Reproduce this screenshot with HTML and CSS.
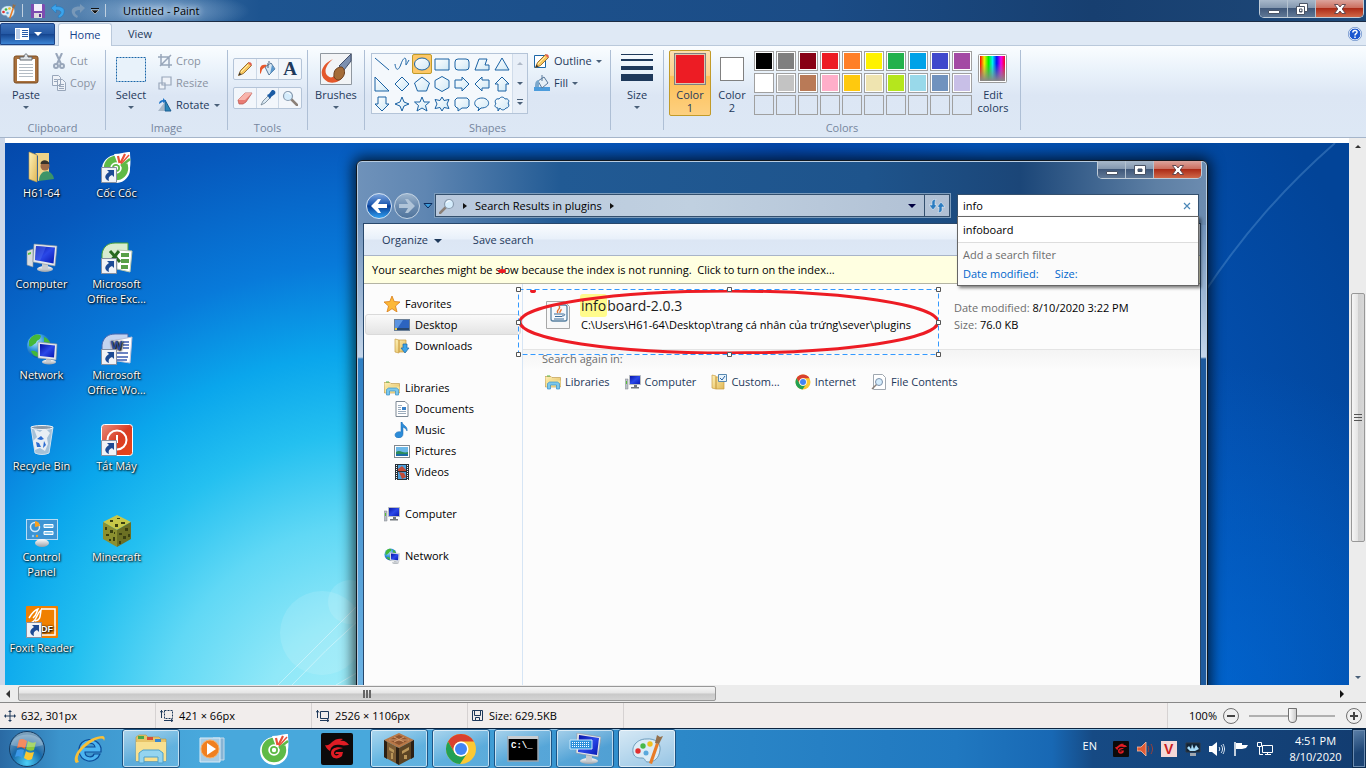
FILE: index.html
```html
<!DOCTYPE html>
<html lang="en">
<head>
  <meta charset="utf-8">
  <title>Untitled - Paint</title>
  <link rel="stylesheet" href="styles.css">
</head>
<body>

  <!-- shared icons -->
  <svg class="sprite" aria-hidden="true">
    <defs>
      <linearGradient id="gScreen" x1="0" y1="0" x2="1" y2="1"><stop offset="0" stop-color="#0410a0"/><stop offset=".5" stop-color="#2a48e8"/><stop offset="1" stop-color="#0616b0"/></linearGradient>
      <linearGradient id="gSilver" x1="0" y1="0" x2="0" y2="1"><stop offset="0" stop-color="#fff"/><stop offset="1" stop-color="#98a0a8"/></linearGradient>
      <linearGradient id="gFolder" x1="0" y1="0" x2="1" y2="1"><stop offset="0" stop-color="#fff2b8"/><stop offset="1" stop-color="#e0b858"/></linearGradient>
      <radialGradient id="gGlobe" cx=".35" cy=".3" r=".8"><stop offset="0" stop-color="#b8ecff"/><stop offset=".5" stop-color="#2a90d8"/><stop offset="1" stop-color="#083c90"/></radialGradient>
      <linearGradient id="gShape" x1="0" y1="0" x2="1" y2="1"><stop offset="0" stop-color="#fff"/><stop offset="1" stop-color="#cfe8f5"/></linearGradient>
      <linearGradient id="gRed" x1="0" y1="0" x2="1" y2="1"><stop offset="0" stop-color="#e89080"/><stop offset=".5" stop-color="#d83c24"/><stop offset="1" stop-color="#e84818"/></linearGradient>
      <linearGradient id="gRainbow"><stop offset="0" stop-color="#f80000"/><stop offset=".17" stop-color="#f8f000"/><stop offset=".34" stop-color="#00f000"/><stop offset=".5" stop-color="#00f0f0"/><stop offset=".67" stop-color="#0010f8"/><stop offset=".84" stop-color="#f000f0"/><stop offset="1" stop-color="#f80020"/></linearGradient>
      <linearGradient id="gFade" x1="0" y1="0" x2="0" y2="1"><stop offset=".3" stop-color="#888" stop-opacity="0"/><stop offset="1" stop-color="#888"/></linearGradient>
    </defs>
    <symbol id="i-computer" viewBox="0 0 32 32">
      <path d="M1 9l6-2v18l-6-2z" fill="#d8dce0" stroke="#8a9298" stroke-width=".6"/><path d="M2 11l3-1v2l-3 1z" fill="#5cc040"/>
      <ellipse cx="19" cy="27" rx="8" ry="3" fill="url(#gSilver)"/><path d="M16 21h6v6h-6z" fill="#c8ccd0"/>
      <path d="M8 2l23 2-2 20-22-4z" fill="#e4e8ec" stroke="#8a929c" stroke-width=".6"/><path d="M10 4l19 1.500-1.500 16L9 18z" fill="url(#gScreen)"/><path d="M10 4l10 1-6 14-5-1z" fill="#4c6cf0" opacity=".5"/>
    </symbol>
    <symbol id="i-pc" viewBox="0 0 16 16">
      <path d="M0 5h3v10H0z" fill="#b8bec4" stroke="#80868c" stroke-width=".5"/><path d="M1 7h1v3H1z" fill="#58c038"/>
      <path d="M4.500 1.500h11v9h-11z" fill="url(#gScreen)" stroke="#b8bcc0"/><path d="M9 11h3v2H9zM6 13h8v1.500H6z" fill="#70767c"/>
    </symbol>
    <symbol id="i-network" viewBox="0 0 32 32">
      <circle cx="13" cy="13" r="12" fill="url(#gGlobe)"/><path d="M3 8c4-8 10-7 12-5-1 5-4 3-5 7-3 1-4 5-7 3zM5 18c4-1 8 1 8 6-4 0-7-3-8-6zM18 4c3 1 6 4 6 6l-6-1z" fill="#44b838"/>
      <ellipse cx="23" cy="29" rx="7" ry="2.500" fill="url(#gSilver)"/><path d="M20 24h5v5h-5z" fill="#c8ccd0"/>
      <path d="M12 9l19 2-1 16-18-2z" fill="#e4e8ec" stroke="#8a929c" stroke-width=".6"/><path d="M14 11l15 1.500-1 12L14 23z" fill="url(#gScreen)"/>
    </symbol>
    <symbol id="i-shortcut" viewBox="0 0 16 16">
      <path d="M.5.5h15v15H.5z" fill="#f0f2f6" stroke="#8890a0"/><path d="M6 3h7v7l-2-2c-3 1-4 3-3 6C3 12 3 8 8 5z" fill="#1c4a94"/>
    </symbol>
    <symbol id="i-coccoc" viewBox="0 0 32 32">
      <path d="M15 4c6-2 9-3 14-3 0 5 1 9 0 16a14 14 0 1 1-14-13z" fill="#fff"/>
      <circle cx="15" cy="17" r="9" fill="none" stroke="#5fba46" stroke-width="6.500"/><circle cx="15" cy="17" r="4" fill="#5fba46"/><circle cx="15" cy="17" r="2.200" fill="#fff"/>
      <path d="M17 14L13 3 28 2v10z" fill="#fff"/>
      <path d="M17 5l1.500 7M24 3l-4.500 9" stroke="#e85038" stroke-width="2.200"/><path d="M28 4l-8 9" stroke="#e85038" stroke-width="1.500"/><path d="M29 8l-9 7" stroke="#5fba46" stroke-width="2.500"/>
    </symbol>
    <symbol id="i-libraries" viewBox="0 0 16 16">
      <path d="M0 2.500h6l1 1h8.500V13H.5z" fill="url(#gFolder)" stroke="#b89040" stroke-width=".6"/><path d="M2 1.500h3v1H2z" fill="#58b848"/><path d="M1 6.500h14.500v6H1z" fill="#f8e498"/>
      <path d="M2.500 15V9.500l2-1.500h8l2 1.500V15h-3v-4h-6v4z" fill="#7cc8ec" stroke="#3890c8" stroke-width=".7"/>
    </symbol>
    <symbol id="i-lens" viewBox="0 0 16 16">
      <path d="M1 15l6-6" stroke="#8a8078" stroke-width="2.500" stroke-linecap="round"/><circle cx="10" cy="6" r="4.500" fill="#d4ecfc" stroke="#8a9cb0" stroke-width="1.200"/><path d="M7.500 5a3 3 0 0 1 4-2" stroke="#fff" fill="none"/>
    </symbol>
    <symbol id="i-pencil" viewBox="0 0 16 16">
      <path d="M1.500 14.500l2-5 8-8 3 3-8 8z" fill="#f8c860" stroke="#8c6428" stroke-width=".9"/><path d="M11 2l2-1 2 2-1 2z" fill="#e06050"/><path d="M1.500 14.500l1-3 2 2z" fill="#333"/><path d="M4 11l7-7" stroke="#fff0b0"/>
    </symbol>
    <symbol id="i-bucket" viewBox="0 0 16 16">
      <path d="M5 6l6-4 4 6-6 6z" fill="#d4e6f4" stroke="#58789a"/><path d="M9 2V0M8 2v5" stroke="#4a6078"/><path d="M7 4C3 3 1 4 0 7v6c2-1 1-5 4-6z" fill="#e8582c"/><path d="M10 13l5-5-3-4z" fill="#5c98cc"/>
    </symbol>
    <symbol id="i-palette" viewBox="0 0 32 32">
      <path d="M3 22C-1 14 6 6 15 6c9-1 15 4 14 11-1 8-5 12-12 12-4 0-2-4-6-4-3 0-6 0-8-3z" fill="#dcecf6" stroke="#6c9cbc"/><circle cx="7" cy="18" r="2.700" fill="#e03030"/><circle cx="12" cy="13" r="2.700" fill="#48b848"/><circle cx="19" cy="11" r="2.700" fill="#f0c020"/><circle cx="15" cy="20" r="2.500" fill="#5aa8dc"/>
      <path d="M18 30l7-20 3 1-7 20z" fill="#e87c28"/><path d="M24 10l2-8 3 2 3-1-4 8z" fill="#94704c"/>
    </symbol>
    <symbol id="i-garena" viewBox="0 0 32 32">
      <rect width="32" height="32" rx="2" fill="#0c0a0a"/>
      <path d="M4 12c3 1 5-1 7-3 3-3 7-4 11-3l-3 2c4-1 7 1 9 4-3 0-5 1-8 0-5-1-8 0-10 3l-1 3c-2-1-4-3-5-6z" fill="#e01c24"/>
      <path d="M22 15c-6-2-12 0-12 5 0 6 7 7 11 3l1-4h-7l-1 2h4c-1 2-5 2-5-1 0-3 5-4 9-5z" fill="#e01c24"/>
    </symbol>
    <symbol id="i-min" viewBox="0 0 12 12"><path d="M.5 7.500h11v3H.5z" fill="#fff" stroke="#4a5466"/></symbol>
    <symbol id="i-max" viewBox="0 0 12 12"><path d="M.5 1.500h11v9H.5zM4 5v2.500h4V5z" fill="#fff" fill-rule="evenodd" stroke="#4a5466"/></symbol>
    <symbol id="i-close" viewBox="0 0 12 12"><path d="M.5 1.500h3.500l2 2.500 2-2.500h3.500L8.200 6l3.300 4.500H8L6 8l-2 2.500H.5L3.800 6z" fill="#fff" stroke="#56404a" stroke-width=".9"/></symbol>
    <symbol id="i-chrome" viewBox="0 0 32 32">
      <circle cx="16" cy="16" r="15" fill="#fcc934"/><path d="M3 8.500A15 15 0 0 1 29 8.500H16a7.500 7.500 0 0 0-6.500 11.200z" fill="#d9412f"/><path d="M3 8.500A15 15 0 0 0 15 31l7.500-11.200a7.500 7.500 0 0 1-13 0z" fill="#22a053"/><circle cx="16" cy="16" r="7.500" fill="#fff"/><circle cx="16" cy="16" r="6" fill="#4285f4"/>
    </symbol>
  </svg>

  <header class="titlebar">
    <div class="quick-access">
      <svg width="16" height="16"><use href="#i-palette"/></svg>
      <span class="qa-line"></span>
      <button aria-label="Save"><svg width="14" height="14" viewBox="0 0 14 14"><path d="M0 0h13l1 1v13H0z" fill="#7c4cb0"/><path d="M3 0h8v7H3z" fill="#f4f0fa"/><path d="M3 9h8v5H3z" fill="#ddd"/><path d="M8 10h2v3H8z" fill="#5c3490"/></svg></button>
      <button aria-label="Undo"><svg width="14" height="14" viewBox="0 0 14 14"><path d="M0 4l5-4v2.500c7 0 9 2.500 8 6.500-1 3-3 4-5 5l-1-2c3-2 4-4 2-5-1-1-2-1-4-1v3z" fill="#3ca4ec" stroke="#1c74b8" stroke-width=".5"/></svg></button>
      <button aria-label="Redo"><svg width="14" height="14" viewBox="0 0 14 14"><path d="M14 4L9 0v2.500C2 2.500 0 5 1 9c1 3 3 4 5 5l1-2c-3-2-4-4-2-5 1-1 2-1 4-1v3z" fill="#7898b8"/></svg></button>
      <button aria-label="Customize"><svg width="8" height="8" viewBox="0 0 8 8"><path d="M0 1.500h8" stroke="#111"/><path d="M0 3h8L4 7z" fill="#111" stroke="#fff" stroke-width=".5"/></svg></button>
      <span class="qa-line"></span>
    </div>
    <span class="titlebar-text">Untitled - Paint</span>
    <div class="window-buttons">
      <button aria-label="Minimize"><svg width="12" height="12"><use href="#i-min"/></svg></button>
      <button aria-label="Restore"><svg width="12" height="12" viewBox="0 0 12 12"><path d="M3.500.5h8v8h-8z" fill="#fff" stroke="#4a5466"/><path d="M.5 3.500h8v8h-8zM3.500 6v3h2.500V6z" fill="#fff" fill-rule="evenodd" stroke="#4a5466"/></svg></button>
      <button class="close" aria-label="Close"><svg width="12" height="12"><use href="#i-close"/></svg></button>
    </div>
  </header>

  <nav class="tabs">
    <button class="file-tab" aria-label="Paint menu"><svg width="28" height="12" viewBox="0 0 28 12"><path d="M0 0h14v12H0z" fill="#fff"/><path d="M1 1h4v10H1z" fill="#b8cce8"/><path d="M7 2.500h6M7 4.500h6M7 6.500h6M7 8.500h6" stroke="#2a5ca8"/><path d="M19 4h8l-4 4z" fill="#fff"/></svg></button>
    <button class="tab active">Home</button>
    <button class="tab">View</button>
    <button class="help" aria-label="Help"><svg width="14" height="14" viewBox="0 0 14 14"><circle cx="7" cy="7" r="6" fill="#1c58d0" stroke="#fff"/><circle cx="7" cy="7" r="6.700" fill="none" stroke="#3c6cb8" stroke-width=".6"/><path d="M4.800 5.500C5 2.500 9.500 3 9 5.500 8.800 6.800 7 6.700 7 8.500M7 9.500v1.500" fill="none" stroke="#fff" stroke-width="1.500"/></svg></button>
  </nav>

  <section class="ribbon">
    <div class="group clipboard">
      <div class="group-body">
        <button class="big"><svg width="26" height="32" viewBox="0 0 26 32"><rect x="1" y="3" width="24" height="27" rx="2" fill="#a8703c" stroke="#7c4c20"/><path d="M4 6h18v22H4z" fill="#fff"/><path d="M6 11.500h14M6 14.500h14M6 17.500h14M6 20.500h14M6 23.500h14" stroke="#b4bcc4"/><path d="M7 7V4h4c0-4 4-4 4 0h4v3z" fill="#e0e4e8" stroke="#606870"/></svg><span>Paste</span><i class="arrow"></i></button>
        <div class="stack">
          <button class="small off"><svg width="14" height="16" viewBox="0 0 14 16" fill="none" stroke="#98a6ba" stroke-width="2"><path d="M4 0l5 11M10 0L5 11"/><circle cx="4" cy="13" r="2"/><circle cx="10" cy="13" r="2"/></svg>Cut</button>
          <button class="small off"><svg width="14" height="16" viewBox="0 0 14 16" fill="#eef2f8" stroke="#98a6ba"><path d="M.5.5h6l2 2v8h-8zM5.500 4.500h5l3 3v8h-8z"/><path d="M2 4.500h3M2 6.500h3M7 9.500h5M7 11.500h5M7 13.500h5"/></svg>Copy</button>
        </div>
      </div>
      <div class="group-label">Clipboard</div>
    </div>

    <div class="group image">
      <div class="group-body">
        <button class="big"><svg width="32" height="32" viewBox="0 0 32 32"><path d="M1.500 4.500h29v24h-29z" fill="#e8f2fa" stroke="#1a66a8" stroke-dasharray="2 1"/></svg><span>Select</span><i class="arrow"></i></button>
        <div class="stack">
          <button class="small off"><svg width="14" height="14" viewBox="0 0 14 14" fill="none" stroke="#98a6ba" stroke-width="1.500"><path d="M3 0v11h11M0 3h11v11M2 12L13 1"/></svg>Crop</button>
          <button class="small off"><svg width="14" height="14" viewBox="0 0 14 14" fill="#eef2f8" stroke="#98a6ba" stroke-width="1.200"><path d="M4 1h9v8H4zM1 7h6v6H1z"/></svg>Resize</button>
          <button class="small"><svg width="14" height="14" viewBox="0 0 14 14"><path d="M0 13L6 5v8z" fill="#a8b8c8"/><path d="M7 13V2l6 11z" fill="#2c86b8" stroke="#1a5c90"/><path d="M1 6c0-3 2-4 4-4V0l3 3-3 2V3.500" fill="#1c74c8"/></svg>Rotate<i class="arrow"></i></button>
        </div>
      </div>
      <div class="group-label">Image</div>
    </div>

    <div class="group tools">
      <div class="group-body">
        <div class="tool-row">
          <button aria-label="Pencil"><svg width="16" height="16"><use href="#i-pencil"/></svg></button>
          <button aria-label="Fill with color"><svg width="16" height="16"><use href="#i-bucket"/></svg></button>
          <button class="letter" aria-label="Text">A</button>
        </div>
        <div class="tool-row">
          <button aria-label="Eraser"><svg width="16" height="16" viewBox="0 0 16 16"><path d="M1 10l7-7h7l-6 9-3 2H2z" fill="#e87c74" stroke="#b85048" stroke-width=".7"/><path d="M1 10l7-7h7l-7 7z" fill="#f8b4ac"/></svg></button>
          <button aria-label="Color picker"><svg width="16" height="16" viewBox="0 0 16 16"><path d="M1 15l2-4 6-6 2 2-6 6z" fill="#dceaf4" stroke="#6c8090" stroke-width=".8"/><path d="M7 5l2-1 3-4c3 0 4 2 3 4l-4 3-1 2z" fill="#1c5ca4"/></svg></button>
          <button aria-label="Magnifier"><svg class="flip" width="16" height="16"><use href="#i-lens"/></svg></button>
        </div>
      </div>
      <div class="group-label">Tools</div>
    </div>

    <div class="group brushes">
      <div class="group-body">
        <button class="big"><svg width="32" height="32" viewBox="0 0 32 32"><path d="M.5.500h31v31H.5z" fill="#f2f4f6" stroke="#9098a0"/><path d="M13 6C0 12-2 24 8 29c7 2 12-1 15-5l-6-6c-2 6-6 8-9 5C3 19 6 12 13 6z" fill="#e4582c"/><path d="M31 1v7l-7 9-5-4z" fill="#7c90b0" stroke="#42506c"/><path d="M14 24c-1-8 4-10 8-10 4 3 3 9-1 12-3 2-5 1-7-2z" fill="#a46c38" stroke="#6c4020"/></svg><span>Brushes</span><i class="arrow"></i></button>
      </div>
    </div>

    <div class="group shapes">
      <div class="group-body">
        <div class="shape-box">
          <div class="shape-grid">
            <button aria-label="Line"><svg viewBox="0 0 16 16"><path d="M1 2l14 12"/></svg></button>
            <button aria-label="Curve"><svg viewBox="0 0 16 16"><path d="M1 8c1 8 4 6 6 0s5-8 5-3-1 6 3-1" fill="none"/></svg></button>
            <button class="picked" aria-label="Oval"><svg viewBox="0 0 16 16"><ellipse cx="8" cy="8" rx="7.500" ry="6"/></svg></button>
            <button aria-label="Rectangle"><svg viewBox="0 0 16 16"><path d="M1 3h14v11H1z"/></svg></button>
            <button aria-label="Rounded rectangle"><svg viewBox="0 0 16 16"><rect x="1" y="3" width="14" height="11" rx="3"/></svg></button>
            <button aria-label="Polygon"><svg viewBox="0 0 16 16"><path d="M5 3h8l-2 6h4v5H1z"/></svg></button>
            <button aria-label="Triangle"><svg viewBox="0 0 16 16"><path d="M8 2l7 12H1z"/></svg></button>
            <button aria-label="Right triangle"><svg viewBox="0 0 16 16"><path d="M1 1l14 14H1z"/></svg></button>
            <button aria-label="Diamond"><svg viewBox="0 0 16 16"><path d="M8 1l7 7-7 7-7-7z"/></svg></button>
            <button aria-label="Pentagon"><svg viewBox="0 0 16 16"><path d="M8 1l7.500 6-3 8h-9l-3-8z"/></svg></button>
            <button aria-label="Hexagon"><svg viewBox="0 0 16 16"><path d="M8 .500l7 4v7l-7 4-7-4v-7z"/></svg></button>
            <button aria-label="Right arrow"><svg viewBox="0 0 16 16"><path d="M1 4h7V1l7 7-7 7v-3H1z"/></svg></button>
            <button aria-label="Left arrow"><svg viewBox="0 0 16 16"><path d="M15 4H8V1L1 8l7 7v-3h7z"/></svg></button>
            <button aria-label="Up arrow"><svg viewBox="0 0 16 16"><path d="M4 15V8H1l7-7 7 7h-3v7z"/></svg></button>
            <button aria-label="Down arrow"><svg viewBox="0 0 16 16"><path d="M4 1v7H1l7 7 7-7h-3V1z"/></svg></button>
            <button aria-label="Four-point star"><svg viewBox="0 0 16 16"><path d="M8 1l2 5 5 2-5 2-2 5-2-5-5-2 5-2z"/></svg></button>
            <button aria-label="Five-point star"><svg viewBox="0 0 16 16"><path d="M8 1l2 5h5.500l-4 3.500L13 15l-5-3-5 3 1.500-5.500L.5 6H6z"/></svg></button>
            <button aria-label="Six-point star"><svg viewBox="0 0 16 16"><path d="M8 1l2 3.500 5-1L13 8l2 4.500-5-1L8 15l-2-3.500-5 1L3 8 1 3.500l5 1z"/></svg></button>
            <button aria-label="Rounded callout"><svg viewBox="0 0 16 16"><path d="M3 2h10l2 2v6l-2 2H8l-4 3v-3H3l-2-2V4z"/></svg></button>
            <button aria-label="Oval callout"><svg viewBox="0 0 16 16"><path d="M4 15l1-3C-2 10 0 2 8 2s10 10-1 10z"/></svg></button>
            <button aria-label="Cloud callout"><svg viewBox="0 0 16 16"><path d="M5 3c2-3 5-2 6 0 3-1 5 2 3 4 2 3 0 5-2 5-2 3-5 2-6 0l-2 3v-3C1 12 0 9 2 8 0 5 2 2 5 3z"/></svg></button>
          </div>
          <div class="shape-scroll"><i class="arrow up"></i><i class="arrow"></i><i class="arrow more"></i></div>
        </div>
        <div class="stack">
          <button class="small"><svg width="16" height="16" viewBox="0 0 16 16"><path d="M.5 2.500h11v12H.5z" fill="#fff" stroke="#1a66a8"/><use href="#i-pencil" width="16" height="16"/></svg>Outline<i class="arrow"></i></button>
          <button class="small"><svg width="16" height="16" viewBox="0 0 16 16"><path d="M0 12h16v4H0z" fill="#4c9cdc"/><path d="M4 6l6-4 4 6-6 5z" fill="#e4eef6" stroke="#58789a"/><path d="M8 0v6" stroke="#58789a"/><path d="M5 5C2 5 1 7 1 12h4z" fill="#7ca8cc"/></svg>Fill<i class="arrow"></i></button>
        </div>
      </div>
      <div class="group-label">Shapes</div>
    </div>

    <div class="group size">
      <div class="group-body">
        <button class="big"><svg width="32" height="32" viewBox="0 0 32 32" fill="#1e395b"><path d="M0 1h32v1H0zM0 6h32v2H0zM0 13h32v4H0zM0 21h32v7H0z"/></svg><span>Size</span><i class="arrow"></i></button>
      </div>
    </div>

    <div class="group colors">
      <div class="group-body">
        <button class="color-pick picked"><span class="chip red"></span><span>Color<br>1</span></button>
        <button class="color-pick"><span class="chip white"></span><span>Color<br>2</span></button>
        <div class="swatches">
          <button class="c-black" aria-label="Black"></button><button class="c-gray" aria-label="Gray"></button><button class="c-darkred" aria-label="Dark red"></button><button class="c-red" aria-label="Red"></button><button class="c-orange" aria-label="Orange"></button><button class="c-yellow" aria-label="Yellow"></button><button class="c-green" aria-label="Green"></button><button class="c-turquoise" aria-label="Turquoise"></button><button class="c-indigo" aria-label="Indigo"></button><button class="c-purple" aria-label="Purple"></button>
          <button class="c-white" aria-label="White"></button><button class="c-lightgray" aria-label="Light gray"></button><button class="c-brown" aria-label="Brown"></button><button class="c-rose" aria-label="Rose"></button><button class="c-gold" aria-label="Gold"></button><button class="c-tan" aria-label="Light yellow"></button><button class="c-lime" aria-label="Lime"></button><button class="c-sky" aria-label="Light turquoise"></button><button class="c-bluegray" aria-label="Blue-gray"></button><button class="c-lavender" aria-label="Lavender"></button>
          <button class="empty"></button><button class="empty"></button><button class="empty"></button><button class="empty"></button><button class="empty"></button><button class="empty"></button><button class="empty"></button><button class="empty"></button><button class="empty"></button><button class="empty"></button>
        </div>
        <button class="big edit-colors"><svg width="30" height="32" viewBox="0 0 30 32"><rect x=".5" y="1.500" width="28" height="28" rx="1" fill="#fff" stroke="#9a9a9a"/><path d="M2 3h25v25H2z" fill="url(#gRainbow)"/><path d="M2 3h25v25H2z" fill="url(#gFade)"/></svg><span>Edit<br>colors</span></button>
      </div>
      <div class="group-label">Colors</div>
    </div>
  </section>

  <main class="workspace">
    <div class="canvas">
      <svg class="glow left" width="200" height="140" viewBox="0 0 200 140" fill="none" stroke="#fff">
        <circle cx="162" cy="88" r="42" fill="#fff" stroke="none" opacity=".12"/><circle cx="190" cy="57" r="22" fill="#fff" stroke="none" opacity=".12"/>
        <path d="M118 140q40-40 82-82M132 140q34-36 68-66M176 140l24-14" opacity=".4"/>
      </svg>
      <svg class="glow right" width="145" height="260" viewBox="0 0 145 260" fill="none" stroke="#7cb4e4"><path d="M0 150C40 90 80 45 131 0" opacity=".3" stroke-width="2"/></svg>

      <ul class="desktop-icons">
        <li><svg width="32" height="32" viewBox="0 0 32 32"><path d="M9 2h14v24l-11 4V5z" fill="#f0d488"/><path d="M3 1l8 3v27l-8-3z" fill="url(#gFolder)" stroke="#c8a048" stroke-width=".6"/><circle cx="19" cy="15" r="4.500" fill="#a06c48"/><path d="M14.500 13c0-5 8-5 9 0z" fill="#38342c"/><path d="M13 30c0-12 13-13 15-2z" fill="#3c9468"/></svg>H61-64</li>
        <li><svg width="32" height="32" viewBox="0 0 32 32"><use href="#i-computer"/></svg>Computer</li>
        <li><svg width="32" height="32" viewBox="0 0 32 32"><use href="#i-network"/></svg>Network</li>
        <li><svg width="32" height="32" viewBox="0 0 32 32"><path d="M5 3h22l-4 26c-4 2-10 2-14 0z" fill="#b8c8d8" opacity=".9" stroke="#e4ecf2"/><path d="M8 5l6 3 5-4 5 5-3 5 1 6-3 7-5-3-5 2-2-9 4-4z" fill="#e8eef4"/><path d="M11 15l4-3 3 3-3 1zM10 18l1 5h4l-2-4zM18 17l2 4-3 3z" fill="#2c6cd0"/><ellipse cx="16" cy="3.500" rx="11" ry="2" fill="#8898a8" stroke="#f0f4f8"/></svg>Recycle Bin</li>
        <li><svg width="32" height="32" viewBox="0 0 32 32"><rect x=".5" y="4.500" width="31" height="20" fill="#3c94d4" stroke="#b8dcf4"/><circle cx="9" cy="12" r="4.500" fill="none" stroke="#d4ecfc" stroke-width="1.500"/><path d="M9 12V6a6 6 0 0 1 5 5z" fill="#f8a020"/><path d="M18 9.500h9v3h-9zM18 16.500h9v3h-9z" fill="#8cc8ec" stroke="#fff"/><circle cx="7" cy="21" r="1.200" fill="#8cf"/><circle cx="11" cy="21" r="1.200" fill="#f8a020"/><ellipse cx="16" cy="28" rx="7" ry="4" fill="url(#gSilver)"/></svg>Control Panel</li>
        <li><svg width="32" height="32" viewBox="0 0 32 32"><rect width="32" height="32" rx="1" fill="#f08000"/><path d="M15 3h14v26H16" fill="none" stroke="#fff" stroke-width="1.500"/><path d="M3 12C6 7 8 4 12 3c-2 4-1 6-5 9M4 17c7-1 6-9 11-13-1 6 0 10-6 11" fill="none" stroke="#fff" stroke-width="1.500"/><text x="9" y="26" font-family="Liberation Sans" font-size="9" font-weight="bold" fill="#fff">PDF</text><use href="#i-shortcut" y="16" width="16" height="16"/></svg>Foxit Reader</li>
        <li><svg width="32" height="32" viewBox="0 0 32 32"><use href="#i-coccoc"/><use href="#i-shortcut" y="16" width="16" height="16"/></svg>Cốc Cốc</li>
        <li><svg width="32" height="32" viewBox="0 0 32 32"><path d="M1 12C2 4 8 1 14 1h13v24H1z" fill="#d8ecd0" stroke="#48a038"/><path d="M16 8l15 1-2 21-13-3z" fill="#fff" stroke="#b8c8b0"/><path d="M20 11h8v4h-8zM20 17h8v4h-8zM20 23h7v4h-7z" fill="#58a048"/><path d="M9 9l10 11M18 9L9 20" stroke="#286820" stroke-width="3"/><use href="#i-shortcut" y="16" width="16" height="16"/></svg>Microsoft Office Exc...</li>
        <li><svg width="32" height="32" viewBox="0 0 32 32"><path d="M1 12C2 4 8 1 14 1h13v24H1z" fill="#c4d4f0" stroke="#4868b0"/><path d="M10 8l21-4-2 26-19-3z" fill="#fff" stroke="#b8c0d8"/><path d="M22 9h6M22 12h6M22 15h6M16 20h11M16 24h11M16 27h10" stroke="#3c5cb0" stroke-width="1.500"/><text x="10" y="17" font-family="Liberation Sans" font-size="12" font-weight="bold" fill="#2c4c9c">W</text><use href="#i-shortcut" y="16" width="16" height="16"/></svg>Microsoft Office Wo...</li>
        <li><svg width="32" height="32" viewBox="0 0 32 32"><rect x=".5" y=".5" width="31" height="31" rx="3" fill="url(#gRed)" stroke="#fff"/><circle cx="16" cy="16" r="9.500" fill="none" stroke="#fff" stroke-width="2"/><path d="M16 11v8" stroke="#fff" stroke-width="2"/><use href="#i-shortcut" y="16" width="16" height="16"/></svg>Tắt Máy</li>
        <li><svg width="32" height="32" viewBox="0 0 32 32"><path d="M16 0l14 7-14 8L2 7z" fill="#c8c848"/><path d="M2 7l14 8v17L2 24z" fill="#8c9030"/><path d="M30 7l-14 8v17l14-8z" fill="#6c7024"/><path d="M9 5h3v2H9zM16 3h3v1h-3zM20 7h4v2h-4zM14 9h3v3h-3zM4 12h2v3H4zM9 15h3v3H9zM5 19h3v2H5zM12 22h2v4h-2zM8 24h2v2H8zM18 18h3v2h-3zM24 13h3v3h-3zM22 21h3v3h-3zM18 26h2v3h-2zM27 19h2v3h-2zM13 17h1v2h-1z" fill="#3c4010"/></svg>Minecraft</li>
      </ul>

      <div class="explorer">
        <div class="explorer-title">
          <div class="window-buttons">
            <button aria-label="Minimize"><svg width="12" height="12"><use href="#i-min"/></svg></button>
            <button aria-label="Maximize"><svg width="12" height="12"><use href="#i-max"/></svg></button>
            <button class="close" aria-label="Close"><svg width="12" height="12"><use href="#i-close"/></svg></button>
          </div>
        </div>

        <div class="nav-row">
          <button class="round back" aria-label="Back"><svg width="16" height="14" viewBox="0 0 16 14"><path d="M0 7l7-7h3L7 5h9v4H7l3 5H7z" fill="#fff"/></svg></button>
          <button class="round" aria-label="Forward"><svg width="16" height="14" viewBox="0 0 16 14"><path d="M16 7L9 0H6l3 5H0v4h9l-3 5h3z" fill="#b0c4d8"/></svg></button>
          <svg class="recent" width="10" height="6" viewBox="0 0 10 6"><path d="M1 .5h8L5 5z" fill="#3c9cdc" stroke="#0c2c5c"/></svg>
          <div class="address">
            <svg width="16" height="16"><use href="#i-lens"/></svg>
            <i class="arrow right"></i><span>Search Results in plugins</span><i class="arrow right"></i>
            <i class="arrow history"></i>
            <button class="refresh" aria-label="Refresh"><svg width="16" height="14" viewBox="0 0 16 14"><path d="M7 0C2 1 3 3 3 6H0l4 5 4-5H6c0-3 0-4 1-6zM9 14c5-1 4-3 4-6h3l-4-5-4 5h2c0 3 0 4-1 6z" fill="#2c7cc0" stroke="#fff" stroke-width=".5"/></svg></button>
          </div>
          <div class="search">
            <input type="text" value="info" aria-label="Search">
            <button aria-label="Clear"><svg width="8" height="8" viewBox="0 0 8 8"><path d="M1 1l6 6M7 1L1 7" stroke="#4c88b8" stroke-width="1.200"/></svg></button>
            <div class="suggestions">
              <div class="suggestion">infoboard</div>
              <div class="filters">
                <p>Add a search filter</p>
                <a href="#">Date modified:</a><a href="#">Size:</a>
              </div>
            </div>
          </div>
        </div>

        <div class="explorer-client">
          <div class="toolbar"><button>Organize <i class="arrow"></i></button><button>Save search</button></div>
          <div class="notice">Your searches might be slow because the index is not running.&nbsp; Click to turn on the index...</div>
          <div class="explorer-body">
            <ul class="tree">
              <li><svg width="16" height="16" viewBox="0 0 16 16"><path d="M8 0l2.200 5.500 5.800.5-4.500 4 1.500 6-5-3.300L3 16l1.500-6L0 6l5.800-.5z" fill="#fcb838" stroke="#d87c18" stroke-width=".8"/></svg>Favorites</li>
              <li class="sub selected"><svg width="16" height="16" viewBox="0 0 16 16"><rect x=".5" y="2.500" width="15" height="11" fill="#2c64c0" stroke="#6c8098"/><path d="M1 3h8L3 12H1z" fill="#5c94e0"/><path d="M1 11h14v2H1z" fill="#284870"/><path d="M1 11h2v2H1z" fill="#f0d040"/></svg>Desktop</li>
              <li class="sub"><svg width="16" height="16" viewBox="0 0 16 16"><path d="M1 1l4 1v13l-4-1zM5 2h7v12H5z" fill="url(#gFolder)" stroke="#c89c40" stroke-width=".7"/><path d="M9 6h4v4h2l-4 5-4-5h2z" fill="#3ca4e8" stroke="#1868a8" stroke-width=".7"/></svg>Downloads</li>
              <li class="gap"><svg width="16" height="16"><use href="#i-libraries"/></svg>Libraries</li>
              <li class="sub"><svg width="16" height="16" viewBox="0 0 16 16"><path d="M2 .5h9l3 3v12H2z" fill="#fff" stroke="#7c8894"/><path d="M4 4.500h4M4 6.500h3M4 8.500h3M4 10.500h8M4 12.500h8" stroke="#9cacbc"/><path d="M8 6h4v3H8z" fill="#3880c8"/></svg>Documents</li>
              <li class="sub"><svg width="16" height="16" viewBox="0 0 16 16"><path d="M7 0h1c1 4 6 4 5 9-1-3-3-3-4-4v7c0 5-8 5-8 1 0-3 4-4 6-3z" fill="#2c8cd8" stroke="#1868b0" stroke-width=".5"/></svg>Music</li>
              <li class="sub"><svg width="16" height="16" viewBox="0 0 16 16"><rect x=".5" y="2.500" width="15" height="12" fill="#fff" stroke="#808890"/><path d="M2 4h12v9H2z" fill="#6cb8e8"/><path d="M2 9c4-3 7 2 12 0v4H2z" fill="#2c8c5c"/><path d="M2 11h12v2H2z" fill="#1c6ca8"/></svg>Pictures</li>
              <li class="sub"><svg width="16" height="16" viewBox="0 0 16 16"><path d="M1 0h14v16H1z" fill="#283038"/><path d="M4 1h8v6H4zM4 8h8v7H4z" fill="#4ca0dc"/><path d="M4 5l4-3 4 4v1H4zM5 8l5 1 2 4-4 2z" fill="#c04c38"/><path d="M2.500 1v15M13.500 1v15" stroke="#fff" stroke-dasharray="1 1"/></svg>Videos</li>
              <li class="gap"><svg width="16" height="16"><use href="#i-pc"/></svg>Computer</li>
              <li class="gap"><svg width="16" height="16"><use href="#i-network"/></svg>Network</li>
            </ul>
            <div class="results">
              <div class="result">
                <svg width="24" height="28" viewBox="0 0 24 28"><path d="M.5.5h18l5 5v22H.5z" fill="#f8f8f8" stroke="#a8a8a8"/><rect x="5" y="4" width="16" height="16" rx="2" fill="#f4f8fc" stroke="#5880a0" stroke-width="1.300"/><path d="M13 5c3 3-4 4-1 7M15 8c1 2-2 2-1 4" stroke="#e8702c" fill="none" stroke-width="1.300"/><path d="M8 13h9M9 15.500h7M8 18h10M17 13c3 0 2 2-1 2" stroke="#3c6c98" fill="none"/></svg>
                <div class="result-name">
                  <h2><mark>info</mark>board-2.0.3</h2>
                  <p>C:\Users\H61-64\Desktop\trang cá nhân của trứng\sever\plugins</p>
                </div>
                <div class="result-info">
                  <p>Date modified: <b>8/10/2020 3:22 PM</b></p>
                  <p>Size: <b>76.0 KB</b></p>
                </div>
              </div>
              <div class="again">
                <p>Search again in:</p>
                <div class="again-links">
                  <a href="#"><svg width="16" height="16"><use href="#i-libraries"/></svg>Libraries</a>
                  <a href="#"><svg width="16" height="16"><use href="#i-pc"/></svg>Computer</a>
                  <a href="#"><svg width="16" height="16" viewBox="0 0 16 16"><path d="M1 1l4 1v13l-4-1zM5 3h8v12H5z" fill="url(#gFolder)" stroke="#c89c40" stroke-width=".7"/><path d="M7.500.5h8v7h-8z" fill="#e8f4fc" stroke="#5888b0"/><path d="M9 4l2 2 3-4" fill="none" stroke="#2860a0"/></svg>Custom...</a>
                  <a href="#"><svg width="16" height="16"><use href="#i-chrome"/></svg>Internet</a>
                  <a href="#"><svg width="16" height="16" viewBox="0 0 16 16"><path d="M2.500.5h9l3 3v12h-12z" fill="#fff" stroke="#a0a8b0"/><path d="M1 15l5-5" stroke="#8a8078" stroke-width="1.500"/><circle cx="8" cy="8" r="3.500" fill="#d4ecfc" stroke="#7c90a8"/></svg>File Contents</a>
                </div>
              </div>
            </div>
          </div>
        </div>
      </div>

      <svg class="drawing" width="450" height="100" viewBox="0 0 450 100">
        <ellipse cx="237" cy="57" rx="209" ry="31" fill="none" stroke="#ed1c24" stroke-width="3"/>
        <ellipse cx="10" cy="6" rx="4" ry="2" fill="#ed1c24"/><ellipse cx="41" cy="26" rx="3" ry="2" fill="#ed1c24"/>
        <path d="M26.500 24.500h420v65h-420z" fill="none" stroke="#fff"/>
        <path d="M26.500 24.500h420v65h-420z" fill="none" stroke="#3399ff" stroke-dasharray="5 3"/>
        <path d="M200 26.500h71M200 87.500h71" stroke="#ed1c24"/>
        <path d="M24.500 22.500h4v4h-4zM235.500 22.500h4v4h-4zM444.500 22.500h4v4h-4zM24.500 55.500h4v4h-4zM444.500 55.500h4v4h-4zM24.500 87.500h4v4h-4zM235.500 87.500h4v4h-4zM444.500 87.500h4v4h-4z" fill="#fff" stroke="#555"/>
      </svg>
    </div>
    <div class="scroll vertical"><i class="arrow up"></i><span class="before"></span><span class="thumb"></span><span class="after"></span><i class="arrow"></i></div>
    <div class="scroll horizontal"><i class="arrow left"></i><span class="thumb"></span><span class="after"></span><i class="arrow right"></i></div>
  </main>

  <footer class="statusbar">
    <div class="status-cell"><svg width="12" height="12" viewBox="0 0 12 12" stroke="#1e395b"><path d="M6 0v12M0 6h12M4.500 1.500h3M4.500 10.500h3M1.500 4.500v3M10.500 4.500v3" fill="none"/></svg>632, 301px</div>
    <div class="status-cell"><svg width="14" height="12" viewBox="0 0 14 12" fill="none" stroke="#1e395b"><path d="M4.500.5h8v8h-8z" stroke-dasharray="2 1"/><path d="M1.500 0v8M0 2.500l1.500-2L3 2.500M4 10.500h9M11 9l2 1.500-2 1.500"/></svg>421 × 66px</div>
    <div class="status-cell"><svg width="14" height="12" viewBox="0 0 14 12" fill="none" stroke="#1e395b"><path d="M4.500 1.500h8v7h-8z"/><path d="M1.500 0v8M0 2.500l1.500-2L3 2.500M4 10.500h9M11 9l2 1.500-2 1.500"/></svg>2526 × 1106px</div>
    <div class="status-cell"><svg width="12" height="12" viewBox="0 0 12 12" fill="none" stroke="#1e395b"><path d="M.5.5h10v10H.5zM2.500.5v5h6v-5M3.500 10.500v-3h4v3"/></svg>Size: 629.5KB</div>
    <div class="status-space"></div>
    <div class="zoom">
      <label for="zoom">100%</label>
      <button aria-label="Zoom out"><svg width="16" height="16" viewBox="0 0 16 16"><circle cx="8" cy="8" r="7.500" fill="#f0f0f0" stroke="#707070"/><path d="M4 8h8" stroke="#444" stroke-width="2"/></svg></button>
      <input type="range" id="zoom" min="0" max="100" value="50">
      <button aria-label="Zoom in"><svg width="16" height="16" viewBox="0 0 16 16"><circle cx="8" cy="8" r="7.500" fill="#f0f0f0" stroke="#707070"/><path d="M4 8h8M8 4v8" stroke="#444" stroke-width="2"/></svg></button>
    </div>
  </footer>

  <div class="taskbar">
    <button class="start" aria-label="Start"><svg width="38" height="38" viewBox="0 0 38 38"><defs><radialGradient id="gOrb" cx=".5" cy=".9" r=".9"><stop offset="0" stop-color="#4cd0f8"/><stop offset=".5" stop-color="#1868a8"/><stop offset="1" stop-color="#88a8c0"/></radialGradient></defs><circle cx="19" cy="19" r="17.500" fill="url(#gOrb)" stroke="#143c64"/><path d="M11 10c3-2 5-1 8 1l-2 8c-3-2-5-2-8-1z" fill="#f0642c"/><path d="M20 11c3 2 5 2 8 1l-2 8c-3 1-5 1-8-1z" fill="#8cc83c"/><path d="M9 20c3-1 5-1 7 0l-2 8c-2-2-5-2-7-1z" fill="#3c98e8"/><path d="M18 21c2 2 5 2 8 1l-2 7c-3 2-5 1-8-1z" fill="#fcc830"/><path d="M3 15C5 1 33 1 35 15c-9 3-22 3-32 0z" fill="#fff" opacity=".25"/></svg></button>
    <nav class="apps">
      <button aria-label="Internet Explorer"><svg width="32" height="32" viewBox="0 0 32 32"><path d="M28 19H12c0 6 8 6 9 2h6c-4 11-21 9-21-4S25 3 28 15zM12 14h10c-1-5-9-5-10 0z" fill="#4cb4f0" stroke="#0c4c98" stroke-width="1.200" fill-rule="evenodd"/><path d="M3 30c-6-6 10-27 27-27 2 1 2 3 1 5 0-4-6-3-12 1C8 16 2 24 6 29z" fill="#f8c038"/></svg></button>
      <button class="open" aria-label="Windows Explorer"><svg width="32" height="32" viewBox="0 0 32 32"><path d="M1 4l3-2h7l2 2h11l2 2h5v22H1z" fill="#e8c468" stroke="#b8943c" stroke-width=".6"/><path d="M3 3h6v3H3z" fill="#48a848"/><path d="M12 4h6v3h-6z" fill="#d84c34"/><path d="M20 6h6v3h-6z" fill="#3888d0"/><path d="M1 9h30v19H1z" fill="#f8e090"/><path d="M4 30V20l4-3h16l4 3v10h-5v-6H9v6z" fill="#94d4f0" stroke="#4ca0cc"/></svg></button>
      <button aria-label="Windows Media Player"><svg width="32" height="32" viewBox="0 0 32 32"><path d="M16 5h11v22H16z" fill="#88b4d4" stroke="#c4dcec"/><path d="M3 5h20v24H3z" fill="#a8cce4" stroke="#d8ecf8"/><circle cx="13" cy="16" r="9" fill="#f08020" stroke="#f8b068"/><path d="M10 10l9 6-9 6z" fill="#fff"/></svg></button>
      <button aria-label="Coc Coc"><svg width="32" height="32"><use href="#i-coccoc"/></svg></button>
      <button aria-label="Garena"><svg width="32" height="32"><use href="#i-garena"/></svg></button>
      <button class="open" aria-label="Minecraft"><svg width="32" height="32" viewBox="0 0 32 32"><path d="M16 0l15 7-15 8L1 7z" fill="#b87848"/><path d="M16 2l10 5-10 5L6 7z" fill="#8c5430"/><path d="M11 4l10 5M21 4L11 9M6 7h20" stroke="#d89c6c"/><path d="M1 7l15 8v17L1 24z" fill="#7c5c34"/><path d="M31 7l-15 8v17l15-8z" fill="#5c4424"/><path d="M1 7l3 2v17l-3-2zM13 14l3 1v17l-3-2zM28 9l3-2v17l-3 2z" fill="#2c2014"/><path d="M6 14l5 3v3l-5-3zM19 18l7-4v3l-7 4zM8 20h2v6H8zM21 22h3v4h-3z" fill="#b89458"/></svg></button>
      <button class="open" aria-label="Chrome"><svg width="32" height="32"><use href="#i-chrome"/></svg></button>
      <button class="open" aria-label="Command Prompt"><svg width="32" height="32" viewBox="0 0 32 32"><path d="M1 4h30v24H1z" fill="#000" stroke="#9ca4ac" stroke-width="1.500"/><path d="M1 3h30v3H1z" fill="#c8ccd0"/><text x="4" y="15" font-family="Liberation Mono" font-weight="bold" font-size="9" fill="#fff">C:\_</text></svg></button>
      <button class="open" aria-label="On-Screen Keyboard"><svg width="32" height="32" viewBox="0 0 32 32"><ellipse cx="20" cy="28" rx="9" ry="3" fill="url(#gSilver)"/><path d="M17 22h6v6h-6z" fill="#c8ccd0"/><path d="M8 0l24 4-3 20-22-4z" fill="#e4e8ec" stroke="#8a929c" stroke-width=".6"/><path d="M10 2l20 3-2 17-19-3z" fill="url(#gScreen)"/><path d="M1 7h22v9H1z" fill="#2c90dc" stroke="#c8e8fc"/><path d="M3 9.500h18M3 11.500h18M3 13.500h18" stroke="#fff" stroke-dasharray="1 1"/></svg></button>
      <button class="open current" aria-label="Paint"><svg width="32" height="32"><use href="#i-palette"/></svg></button>
    </nav>
    <div class="tray">
      <span class="lang">EN</span>
      <svg width="16" height="16"><use href="#i-garena"/></svg>
      <svg width="16" height="16" viewBox="0 0 16 16"><path d="M0 6h4l5-5v14l-5-5H0z" fill="#e05c34" stroke="#f8c0a8" stroke-width=".8"/><path d="M11 5c1 2 1 4 0 6M14 3c2 4 2 6 0 10" fill="none" stroke="#a04038"/></svg>
      <svg width="16" height="16" viewBox="0 0 16 16"><path d="M0 0h16v16H0z" fill="#f4d8d8"/><text x="3" y="13" font-family="Liberation Sans" font-weight="bold" font-size="14" fill="#c81c24">V</text></svg>
      <svg width="16" height="16" viewBox="0 0 16 16"><path d="M1 2h14v9H1z" fill="#102438" stroke="#303840"/><path d="M2 7l2-2 2 3 1-5 2 5 2-4 3 4-4 2H5z" fill="#a8dcf8"/><path d="M5 12h6v3H5z" fill="#a0a8b0"/></svg>
      <svg width="16" height="16" viewBox="0 0 16 16"><path d="M0 5h3l5-4v14l-5-4H0z" fill="#fff"/><path d="M10 6c1 1 1 3 0 4M12 4c2 2 2 6 0 8M14 3c2 4 2 6 0 10" fill="none" stroke="#dce8f4"/></svg>
      <svg width="16" height="16" viewBox="0 0 16 16"><path d="M2 1v14" stroke="#fff" stroke-width="1.500"/><path d="M3 2h6v2h6l-2 3-4 1H3z" fill="#fff"/></svg>
      <svg width="16" height="16" viewBox="0 0 16 16" fill="none" stroke="#fff"><path d="M5.500 4.500h10v7h-10zM8 13.500h6M10.500 12v1"/><path d="M.5 1.500h4v4h-4zM2.500 6v7.500H6" /></svg>
      <div class="clock">4:51 PM<br>8/10/2020</div>
      <button class="show-desktop" aria-label="Show desktop"></button>
    </div>
  </div>
</body>
</html>
```
FILE: styles.css
```css
* {
  box-sizing: border-box;
}

body {
  margin: 0;
  height: 100vh;
  overflow: hidden;
  display: flex;
  flex-direction: column;
  font-family: "Open Sans", "Noto Sans", sans-serif;
  font-size: 11px;
  line-height: 16px;
  color: #000;
  background: #fff;
}

button {
  margin: 0;
  padding: 0;
  border: 0;
  background: none;
  font: inherit;
  color: inherit;
}

svg {
  display: block;
  flex: none;
}

ul, p, h2 {
  margin: 0;
  padding: 0;
  list-style: none;
  font-weight: normal;
}

a {
  text-decoration: none;
}

.sprite {
  position: absolute;
  width: 0;
  height: 0;
}

/* small triangles */
.arrow {
  flex: none;
  width: 0;
  height: 0;
  border: 3px solid transparent;
  border-top-color: #4a6079;
  border-bottom: 0;
}

.arrow.up {
  border: 3px solid transparent;
  border-bottom-color: #333;
  border-top: 0;
}

.arrow.left {
  border: 4px solid transparent;
  border-right-color: #333;
  border-left: 0;
}

.arrow.right {
  border: 4px solid transparent;
  border-left-color: #111;
  border-right: 0;
}

/* title bar */
.titlebar {
  flex: none;
  height: 22px;
  display: flex;
  align-items: center;
  border-bottom: 1px solid #1c2c44;
  background:
    radial-gradient(ellipse 90px 20px at 160px 11px, rgba(170, 200, 230, 0.7), transparent),
    linear-gradient(90deg, #5b84ae 0, #4a7aaa 100px, #1d5490 260px, #1b4c86 60%, #173f70 80%, #1e4878);
}

.quick-access {
  display: flex;
  align-items: center;
  gap: 8px;
  width: 119px;
}

.quick-access svg:first-child {
  margin-right: -2px;
}

.qa-line {
  width: 1px;
  height: 13px;
  background: #c0d0e0;
}

.titlebar-text {
  flex: 1;
  padding-left: 4px;
  text-shadow: 0 0 6px #fff, 0 0 10px #bcd4ec;
}

.window-buttons {
  align-self: flex-start;
  display: flex;
  margin-right: 2px;
  border: 1px solid #c0ccd8;
  border-top: 0;
  border-radius: 0 0 5px 5px;
  overflow: hidden;
}

.window-buttons button {
  width: 28px;
  height: 17px;
  display: flex;
  align-items: center;
  justify-content: center;
  border-right: 1px solid #b4c2d0;
  background: linear-gradient(#a8b8ca, #8498b0 45%, #40587a 50%, #607896);
}

.window-buttons .close {
  width: 47px;
  border-right: 0;
  background: linear-gradient(#dca49c, #cc7060 45%, #ac2c18 50%, #d06848);
}

/* tabs */
.tabs {
  flex: none;
  height: 24px;
  display: flex;
  align-items: flex-end;
  background: #dfe9f5;
  border-bottom: 1px solid #bac9db;
}

.file-tab {
  width: 55px;
  height: 22px;
  padding-left: 14px;
  border: 1px solid #1c4488;
  border-radius: 2px 2px 0 0;
  background: linear-gradient(#3c70b8, #2458a4 50%, #164690 52%, #3c84d4);
}

.tab {
  width: 56px;
  height: 22px;
  color: #1e395b;
}

.tab.active {
  width: 54px;
  height: 23px;
  margin-left: 3px;
  margin-bottom: -1px;
  border: 1px solid #bac9db;
  border-bottom: 0;
  border-radius: 3px 3px 0 0;
  background: #fbfdff;
  color: #15428b;
}

.help {
  margin-left: auto;
  margin-right: 4px;
  align-self: center;
}

/* ribbon */
.ribbon {
  flex: none;
  height: 92px;
  display: flex;
  padding: 4px 0 2px;
  background: linear-gradient(#fafdff, #e8f1fa 30%, #dce6f4 55%, #dde8f5);
  border-bottom: 1px solid #a5b5ca;
  color: #1e395b;
}

.group {
  flex: none;
  display: flex;
  flex-direction: column;
  padding-right: 1px;
  background: linear-gradient(#aebfd5, #aebfd5) right top / 1px 80px no-repeat;
}

.group-body {
  flex: 1;
  display: flex;
}

.group-label {
  height: 14px;
  line-height: 14px;
  text-align: center;
  color: #76869e;
}

.group .arrow {
  margin-left: 4px;
}

.big {
  display: flex;
  flex-direction: column;
  align-items: center;
  line-height: 13px;
  padding-top: 3px;
}

.big svg {
  margin-bottom: 3px;
}

.group .big .arrow {
  margin: 5px 0 0;
}

.stack {
  display: flex;
  flex-direction: column;
}

.small {
  height: 22px;
  display: flex;
  align-items: center;
  gap: 4px;
}

.small .arrow {
  margin: 0;
}

.off {
  color: #8a93a2;
}

.clipboard { width: 106px; }
.clipboard .big { width: 52px; }
.image { width: 122px; }
.image .big { width: 50px; margin-right: 2px; }
.tools { width: 80px; }
.brushes { width: 57px; }
.brushes .big, .size .big { width: 100%; }
.shapes { width: 246px; }
.size { width: 53px; }
.colors { width: 357px; }

.tools .group-body {
  flex-direction: column;
  padding: 8px 5px 0;
  gap: 7px;
}

.tool-row {
  display: flex;
  height: 22px;
  border: 1px solid #b4c4d8;
  border-radius: 2px;
  background: #f2f6fb;
}

.tool-row button {
  flex: 1;
  display: flex;
  align-items: center;
  justify-content: center;
  border-right: 1px solid #ccd8e6;
}

.tool-row button:last-child {
  border-right: 0;
}

.letter {
  font: bold 19px/20px "Liberation Serif", serif;
}

.flip {
  transform: scaleX(-1);
}

.shapes .group-body {
  padding-left: 6px;
}

.shape-box {
  display: flex;
  width: 157px;
  height: 61px;
  margin: 3px 6px 0 0;
  border: 1px solid #b4c4d8;
  background: #f4f8fc;
}

.shape-grid {
  flex: 1;
  display: grid;
  grid-template-columns: repeat(7, 20px);
  grid-auto-rows: 20px;
}

.shape-grid button {
  display: flex;
  align-items: center;
  justify-content: center;
}

.shape-grid .picked {
  border: 1px solid #c29b29;
  border-radius: 2px;
  background: #fdc767;
}

.shape-grid svg {
  width: 16px;
  height: 16px;
  fill: url(#gShape);
  stroke: #1a62a4;
}

.shape-scroll {
  width: 15px;
  display: flex;
  flex-direction: column;
  justify-content: space-around;
  align-items: center;
  border-left: 1px solid #d0dcea;
  background: #e8eff8;
}

.shape-scroll .arrow {
  margin: 0;
}

.shape-scroll .up {
  border-bottom-color: #b0bac8;
}

.shape-scroll .more {
  box-shadow: 0 -2px #e8eff8, 0 -3px #4a6079;
}

.colors .group-body {
  padding-left: 5px;
}

.color-pick {
  width: 42px;
  height: 66px;
  display: flex;
  flex-direction: column;
  align-items: center;
  padding-top: 3px;
  line-height: 13px;
  border-radius: 2px;
}

.color-pick.picked {
  padding-top: 2px;
  border: 1px solid #c29b29;
  background: linear-gradient(#fce0b0, #fdd08a 38%, #fdc057 40%, #fdd080);
}

.chip {
  flex: none;
  width: 32px;
  height: 32px;
  margin-bottom: 3px;
  border: 1px solid #808080;
  box-shadow: inset 0 0 0 1px #d8c8b0;
}

.chip.red {
  background-color: #ed1c24;
}

.chip.white {
  width: 24px;
  height: 24px;
  margin: 4px 0 7px;
  background-color: #fff;
  box-shadow: none;
}

.swatches {
  display: grid;
  grid-template-columns: repeat(10, 20px);
  grid-auto-rows: 20px;
  gap: 2px;
  margin: 1px 0 0 1px;
}

.swatches button {
  border: 1px solid #a0a0a0;
  box-shadow: inset 0 0 0 1px #fff;
}

.swatches .empty {
  box-shadow: none;
}

.c-black { background: #000; }
.c-gray { background: #7f7f7f; }
.c-darkred { background: #880015; }
.c-red { background: #ed1c24; }
.c-orange { background: #ff7f27; }
.c-yellow { background: #fff200; }
.c-green { background: #22b14c; }
.c-turquoise { background: #00a2e8; }
.c-indigo { background: #3f48cc; }
.c-purple { background: #a349a4; }
.c-white { background: #fff; }
.c-lightgray { background: #c3c3c3; }
.c-brown { background: #b97a57; }
.c-rose { background: #ffaec9; }
.c-gold { background: #ffc90e; }
.c-tan { background: #efe4b0; }
.c-lime { background: #b5e61d; }
.c-sky { background: #99d9ea; }
.c-bluegray { background: #7092be; }
.c-lavender { background: #c8bfe7; }

.edit-colors {
  width: 42px;
}

/* workspace */
.workspace {
  flex: 1;
  min-height: 0;
  display: grid;
  grid-template-columns: 1fr 17px;
  grid-template-rows: 1fr 18px;
  background: #cdd8e9;
}

.canvas {
  position: relative;
  overflow: hidden;
  margin-left: 5px;
  border-top: 5px solid #fff;
  background:
    radial-gradient(circle at 1200px 540px, rgba(0, 110, 220, 0.6), transparent 320px),
    radial-gradient(circle at 370px 600px, #a8f0fa 0, #90e8f8 120px, #60d8f5 220px, #24c0f0 310px, #0aa6ec 390px, #087ada 480px, #0658bc 610px, #0446a8 720px, #0352b4 850px, #024498 1100px);
}

.glow {
  position: absolute;
}

.glow.left {
  left: 155px;
  top: 402px;
}

.glow.right {
  right: 0;
  top: 0;
}

.desktop-icons {
  position: relative;
  height: 546px;
  width: 150px;
  display: grid;
  grid-template-rows: repeat(6, 91px);
  grid-auto-flow: column;
  grid-auto-columns: 75px;
  text-align: center;
  line-height: 15px;
  color: #fff;
  text-shadow: 1px 1px 2px #000, 0 0 2px #000;
}

.desktop-icons li {
  padding: 8px 5px 0 3px;
}

.desktop-icons svg {
  margin: 0 auto 2px;
}

/* explorer window */
.explorer {
  position: absolute;
  left: 351px;
  top: 17px;
  width: 852px;
  height: 600px;
  display: flex;
  flex-direction: column;
  padding: 0 6px;
  border: 1px solid #101820;
  border-radius: 6px 6px 0 0;
  box-shadow: inset 0 0 0 1px #b8cce0, 0 0 14px 3px rgba(0, 0, 0, 0.7);
  background:
    linear-gradient(90deg, #6f92ba, #5f86b2 8%, #215a94 24%, #1e548c 60%, #1b4678 78%, #5d7fa4 94%, #6c8cb0) top / 100% 64px no-repeat,
    linear-gradient(#6f92ba 60px, #c4d6ea 196px, #1d5a9e 198px) right / 50% 100% no-repeat,
    linear-gradient(#6f92ba 60px, #c4d6ea 196px, #2f80c4 198px, #7cc0ec);
}

.explorer-title {
  height: 33px;
  display: flex;
  justify-content: flex-end;
}

.explorer-title .window-buttons {
  margin-right: -1px;
}

.nav-row {
  flex: none;
  height: 23px;
  display: flex;
  align-items: center;
}

.round {
  flex: none;
  width: 26px;
  height: 26px;
  margin: 0 1px;
  display: flex;
  align-items: center;
  justify-content: center;
  border: 1px solid #c4d4e4;
  border-radius: 50%;
  background: linear-gradient(#9cb4cc, #6c8cb0 50%, #50749c);
}

.round.back {
  margin-left: 3px;
  border-color: #d4e4f4;
  background: linear-gradient(#7ca4dc, #1c58b0 45%, #083c94 50%, #30a0f0);
}

.recent {
  margin: 0 2px;
}

.address {
  flex: 1;
  height: 23px;
  display: flex;
  align-items: center;
  gap: 8px;
  padding-left: 3px;
  border: 1px solid #34506e;
  background: linear-gradient(90deg, #b8c8dc, #c0d0e0 50%, #b0c0d4);
  box-shadow: 0 0 0 1px #7c9cbc;
}

.address .right {
  border-top-width: 3px;
  border-bottom-width: 3px;
}

.address .history {
  margin-left: auto;
  border-width: 4px 4px 0;
  border-top-color: #000040;
}

.refresh {
  width: 25px;
  height: 21px;
  display: flex;
  align-items: center;
  justify-content: center;
  border-left: 1px solid #34506e;
}

.search {
  position: relative;
  flex: none;
  width: 242px;
  height: 23px;
  margin: 0 2px 0 7px;
  display: flex;
  align-items: center;
  border: 1px solid #34506e;
  border-bottom-color: #666;
  background: #fff;
}

.search input {
  flex: 1;
  min-width: 0;
  border: 0;
  padding: 0 5px;
  outline: 0;
  font: inherit;
}

.search button {
  margin-right: 7px;
}

.suggestions {
  position: absolute;
  left: -1px;
  right: -1px;
  top: 21px;
  height: 70px;
  z-index: 2;
  border: 1px solid #666;
  background: #fff;
  box-shadow: 2px 2px 3px rgba(0, 0, 0, 0.5);
}

.suggestion {
  height: 25px;
  padding: 5px;
}

.filters {
  padding: 2px 5px;
  height: 43px;
  line-height: 19px;
  border-top: 1px solid #ddd;
  background: #fbfbfb;
  color: #6d6d6d;
}

.filters a {
  margin-right: 16px;
  color: #0066cc;
}

.explorer-client {
  flex: 1;
  margin-top: 6px;
  display: flex;
  flex-direction: column;
  border: 1px solid #28486c;
  border-bottom: 0;
  background: #fcfcfc;
}

.toolbar {
  flex: none;
  height: 32px;
  display: flex;
  align-items: center;
  gap: 31px;
  padding-left: 18px;
  border-bottom: 1px solid #a8b4c8;
  background: linear-gradient(#fafcfe, #e8f0fa 48%, #dce6f4 52%, #dde8f6);
  color: #1e395b;
}

.toolbar .arrow {
  display: inline-block;
  margin-left: 3px;
  vertical-align: middle;
  border-width: 4px 4px 0;
  border-top-color: #1e395b;
}

.notice {
  flex: none;
  height: 28px;
  padding: 6px 8px;
  border-bottom: 1px solid #b4b4a4;
  background: #ffffe1;
  white-space: nowrap;
}

.explorer-body {
  flex: 1;
  display: flex;
}

.tree {
  flex: none;
  width: 159px;
  padding: 9px 1px 0;
  border-right: 1px solid #d6e5f5;
}

.tree li {
  height: 21px;
  display: flex;
  align-items: center;
  gap: 5px;
  padding-left: 19px;
}

.tree .sub {
  padding-left: 29px;
}

.tree .gap {
  margin-top: 21px;
}

.tree .selected {
  border-radius: 3px;
  border: 1px solid #dadada;
  padding-left: 28px;
  background: linear-gradient(#fafafa, #e4e4e4);
}

.results {
  flex: 1;
  min-width: 0;
}

.result {
  display: flex;
  height: 66px;
  padding: 9px 0 0 23px;
  border-bottom: 1px solid #e4e4e4;
}

.result > svg {
  margin-top: 8px;
}

.result-name {
  width: 384px;
  padding-left: 11px;
}

.result h2 {
  font-size: 14px;
  line-height: 26px;
  color: #1c1c1c;
}

.result mark {
  padding: 2px 1px;
  margin-left: -1px;
  border-radius: 3px;
  background: #fffb8c;
  color: inherit;
}

.result-name p {
  line-height: 12px;
  white-space: nowrap;
}

.result-info {
  padding-top: 6px;
  line-height: 17px;
  color: #6d6d6d;
}

.result-info b {
  font-weight: normal;
  color: #000;
}

.again {
  padding: 1px 0 0 19px;
  color: #6d6d6d;
  background: linear-gradient(#f4f4f4, #fcfcfc 20px);
}

.again-links {
  display: flex;
  gap: 15px;
  padding: 7px 0 0 3px;
}

.again-links a {
  display: flex;
  gap: 4px;
  color: #1e395b;
}

.drawing {
  position: absolute;
  left: 487px;
  top: 122px;
}

/* scroll bars */
.scroll {
  display: flex;
  align-items: center;
  background: #ececec;
}

.vertical {
  flex-direction: column;
  padding: 7px 0 6px;
}

.vertical .before { flex: 143; }
.vertical .thumb { flex: 245; width: 14px; background: linear-gradient(90deg, #f6f6f6, #e4e4e4 48%, #d0d0d0 52%, #d8d8d8); }
.vertical .after { flex: 132; }

.horizontal {
  grid-column: 1 / 3;
  padding: 0 22px 0 6px;
  border-bottom: 1px solid #888;
}

.horizontal .thumb {
  flex: 696;
  height: 15px;
  margin-left: 8px;
  background: linear-gradient(#f6f6f6, #e4e4e4 48%, #c8c8c8 52%, #d4d4d4);
}

.horizontal .after { flex: 624; }

.thumb {
  display: flex;
  align-items: center;
  justify-content: center;
  border: 1px solid #989898;
  border-radius: 2px;
}

.thumb::after {
  content: "";
  width: 8px;
  height: 8px;
  background: repeating-linear-gradient(#555 0 1px, transparent 1px 3px);
}

.horizontal .thumb::after {
  background: repeating-linear-gradient(90deg, #666 0 2px, transparent 2px 3px);
}

/* status bar */
.statusbar {
  flex: none;
  height: 25px;
  display: flex;
  background: #f1edec;
}

.status-cell {
  width: 156px;
  display: flex;
  align-items: center;
  gap: 5px;
  padding-left: 4px;
  border-right: 1px solid #d6d2d2;
}

.status-space {
  flex: 1;
  border-right: 1px solid #d6d2d2;
}

.zoom {
  width: 198px;
  display: flex;
  align-items: center;
  justify-content: flex-end;
  gap: 6px;
  padding-right: 4px;
  background: #f0f0f0;
}

.zoom input {
  width: 86px;
  height: 18px;
  margin: 0 5px 0 4px;
  appearance: none;
  background: linear-gradient(#b0b0b0, #b0b0b0) center / 100% 2px no-repeat;
}

.zoom input::-webkit-slider-thumb {
  appearance: none;
  width: 9px;
  height: 15px;
  border: 1px solid #707070;
  border-radius: 1px 1px 5px 5px;
  background: linear-gradient(90deg, #fff, #ccc);
}

/* taskbar */
.taskbar {
  flex: none;
  height: 40px;
  display: flex;
  border-top: 1px solid #0c2440;
  box-shadow: inset 0 1px #8cc0e4;
  background: linear-gradient(90deg, #2a6aa4 0, #3c94cc 60px, #48a8dc 200px, #48a8dc 380px, #2c88c8 50%, #2078c0 70%, #1868b4 77%, #164a84 80%, #123c70);
}

.start {
  width: 54px;
  display: flex;
  align-items: center;
  justify-content: center;
}

.apps {
  flex: 1;
  display: flex;
  gap: 4px;
  padding: 0 6px;
}

.apps button {
  width: 58px;
  display: flex;
  align-items: center;
  justify-content: center;
}

.apps .open {
  border: 1px solid #1c5484;
  border-radius: 3px;
  box-shadow: inset 0 0 0 1px rgba(255, 255, 255, 0.6);
  background: linear-gradient(160deg, rgba(255, 255, 255, 0.55), rgba(255, 255, 255, 0.15) 60%);
}

.apps .current {
  background: linear-gradient(160deg, rgba(255, 255, 255, 0.8), rgba(255, 255, 255, 0.5));
}

.tray {
  display: flex;
  align-items: center;
  gap: 8px;
  color: #fff;
}

.lang {
  margin-right: 8px;
  padding-bottom: 5px;
}

.clock {
  width: 69px;
  text-align: center;
}

.show-desktop {
  width: 14px;
  height: 100%;
  margin-left: -6px;
  border: 1px solid #0c2c50;
  box-shadow: inset 0 0 0 1px #6c8cb0;
  background: linear-gradient(160deg, #5c80a8, #1c4474 60%);
}
```
